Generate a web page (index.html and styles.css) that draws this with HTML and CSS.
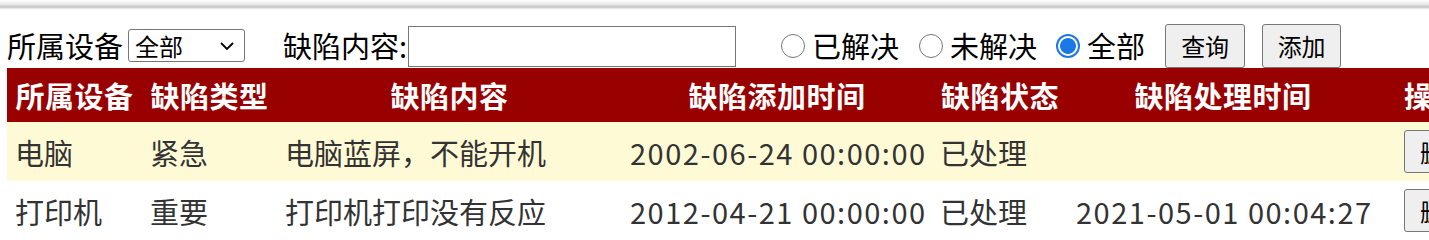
FILE: index.html
```html
<!DOCTYPE html>
<html lang="zh-CN">
<head>
<meta charset="utf-8">
<title>缺陷管理</title>
<link rel="stylesheet" href="styles.css">
</head>
<body>
<div class="shade"></div>
<div class="page">
  <form class="filter">
    <label class="lbl">所属设备</label>
    <select class="sel"><option>全部</option><option>电脑</option><option>打印机</option></select>
    <label class="lbl lbl-content">缺陷内容:</label>
    <input class="txt" type="text">
    <span class="radio r1"></span><span class="lbl rl">已解决</span>
    <span class="radio r2"></span><span class="lbl rl">未解决</span>
    <span class="radio r3 checked"></span><span class="lbl rl">全部</span>
    <button type="button" class="btn b1">查询</button>
    <button type="button" class="btn b2">添加</button>
  </form>
  <table class="grid">
    <colgroup>
      <col class="c1"><col class="c2"><col class="c3"><col class="c4"><col class="c5"><col class="c6"><col class="c7">
    </colgroup>
    <thead>
      <tr><th>所属设备</th><th>缺陷类型</th><th>缺陷内容</th><th>缺陷添加时间</th><th>缺陷状态</th><th>缺陷处理时间</th><th class="op">操作</th></tr>
    </thead>
    <tbody>
      <tr class="alt"><td>电脑</td><td>紧急</td><td>电脑蓝屏，不能开机</td><td class="dt">2002-06-24 00:00:00</td><td>已处理</td><td class="dt"></td><td class="op"><button type="button" class="btn rb">删除</button></td></tr>
      <tr><td>打印机</td><td>重要</td><td>打印机打印没有反应</td><td class="dt">2012-04-21 00:00:00</td><td>已处理</td><td class="dt">2021-05-01 00:04:27</td><td class="op"><button type="button" class="btn rb">删除</button></td></tr>
    </tbody>
  </table>
</div>
</body>
</html>
```
FILE: styles.css
```css
html, body {
  margin: 0;
  padding: 0;
  overflow: hidden;
  background: #fff;
}
body {
  font-family: "Noto Sans CJK SC", "Noto Sans", sans-serif;
  font-size: 29px;
  color: #000;
}
.shade {
  height: 10px;
  background: linear-gradient(to bottom, #ffffff 0, #ececec 4px, #c4c4c4 7px, #d8d8d8 8px, #f6f6f6 9px, #ffffff 10px);
}
.page {
  padding: 13px 0 0 7px;
}
.filter {
  display: flex;
  align-items: center;
  height: 45px;
  margin: 0;
  white-space: nowrap;
}
.lbl {
  line-height: 45px;
}
.sel {
  margin-left: 5px;
  width: 117px;
  height: 33px;
  font-family: inherit;
  font-size: 24px;
  line-height: 31px;
  padding: 0 0 0 6px;
  border: 1px solid #767676;
  border-radius: 3px;
  background: #fff url("data:image/svg+xml;utf8,<svg xmlns='http://www.w3.org/2000/svg' width='16' height='10' viewBox='0 0 16 10'><path d='M2 2 L8 8 L14 2' fill='none' stroke='%23000' stroke-width='1.8'/></svg>") no-repeat right 9px center;
  -webkit-appearance: none;
  appearance: none;
  color: #000;
}
.lbl-content {
  margin-left: 38px;
}
.txt {
  width: 328px;
  height: 41px;
  box-sizing: border-box;
  border: 1px solid #767676;
  margin: 2px 0 0 1px;
  padding: 0 4px;
  font-size: 24px;
}
.radio {
  box-sizing: border-box;
  width: 24px;
  height: 24px;
  border: 1.5px solid #767676;
  border-radius: 50%;
  background: #fff;
  flex: none;
}
.radio.checked {
  border: 2px solid #1b78e6;
  background: radial-gradient(circle, #1b78e6 0, #1b78e6 7.5px, #fff 8.3px);
}
.r1 { margin-left: 45px; }
.r2 { margin-left: 20px; }
.r3 { margin-left: 19px; }
.rl { margin-left: 7px; }
.btn {
  box-sizing: border-box;
  height: 44px;
  width: 80px;
  font-family: inherit;
  font-size: 24px;
  line-height: 40px;
  padding: 0;
  background: #efefef;
  border: 1px solid #767676;
  border-radius: 3px;
  color: #000;
}
.b1 { margin-left: 20px; }
.b2 { margin-left: 17px; width: 79px; }
.grid {
  border-collapse: collapse;
  table-layout: fixed;
  width: 1571px;
  color: #333;
}
.c1 { width: 135px; }
.c2 { width: 135px; }
.c3 { width: 345px; }
.c4 { width: 310px; }
.c5 { width: 136px; }
.c6 { width: 310px; }
.c7 { width: 200px; }
.grid th {
  background: #990000;
  color: #fff;
  font-weight: bold;
  height: 54px;
  padding: 0 8px;
  text-align: center;
  white-space: nowrap;
  overflow: hidden;
  letter-spacing: 0.5px;
}
.grid td {
  height: 59px;
  padding: 0 8px;
  white-space: nowrap;
  text-align: left;
}
.grid td.dt {
  letter-spacing: 1.5px;
}
.grid th.op, .grid td.op {
  text-align: left;
  padding-left: 26px;
}
.grid tr.alt td {
  background: #fffad6;
}
.rb {
  height: 43px;
  width: 80px;
  display: block;
}
```
